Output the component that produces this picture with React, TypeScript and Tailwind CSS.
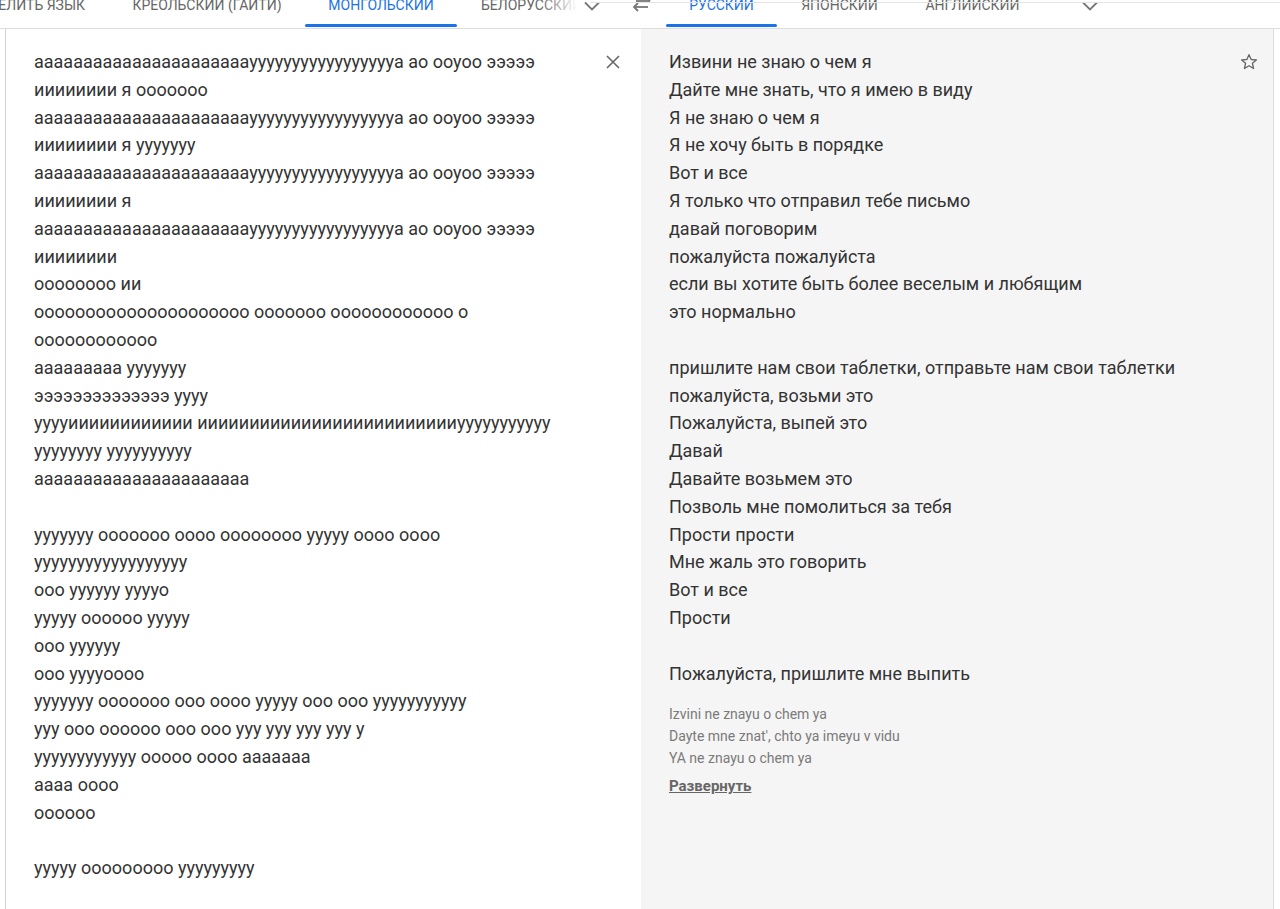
import React from "react";

const L1 = "аааааааааааааааааааааауууууууууууууууууа ао ооуоо эээээ";
const left = [
  L1,
  "ииииииии я ооооооо",
  L1,
  "ииииииии я ууууууу",
  L1,
  "ииииииии я",
  L1,
  "ииииииии",
  "оооооооо ии",
  "ооооооооооооооооооооо ооооооо оооооооооооо о",
  "оооооооооооо",
  "ааааааааа ууууууу",
  "ээээээээээээээ уууу",
  "ууууииииииииииии иииииииииииииииииииииииииууууууууууу",
  "уууууууу уууууууууу",
  "аааааааааааааааааааааа",
  "",
  "ууууууу ооооооо оооо оооооооо ууууу оооо оооо",
  "уууууууууууууууууу",
  "ооо уууууу ууууо",
  "ууууу оооооо ууууу",
  "ооо уууууу",
  "ооо ууууоооо",
  "ууууууу ооооооо ооо оооо ууууу ооо ооо ууууууууууу",
  "ууу ооо оооооо ооо ооо ууу ууу ууу ууу у",
  "уууууууууууу ооооо оооо ааааааа",
  "аааа оооо",
  "оооооо",
  "",
  "ууууу ооооооооо ууууууууу",
];

const right = [
  "Извини не знаю о чем я",
  "Дайте мне знать, что я имею в виду",
  "Я не знаю о чем я",
  "Я не хочу быть в порядке",
  "Вот и все",
  "Я только что отправил тебе письмо",
  "давай поговорим",
  "пожалуйста пожалуйста",
  "если вы хотите быть более веселым и любящим",
  "это нормально",
  "",
  "пришлите нам свои таблетки, отправьте нам свои таблетки",
  "пожалуйста, возьми это",
  "Пожалуйста, выпей это",
  "Давай",
  "Давайте возьмем это",
  "Позволь мне помолиться за тебя",
  "Прости прости",
  "Мне жаль это говорить",
  "Вот и все",
  "Прости",
  "",
  "Пожалуйста, пришлите мне выпить",
];

function Chevron() {
  return (
    <svg width="20" height="12" viewBox="0 0 20 12" fill="none">
      <path d="M3 1.5 L10 8.5 L17 1.5" stroke="#777" strokeWidth="1.8" />
    </svg>
  );
}

function Tab({ label, active, w }: { label: string; active?: boolean; w: string }) {
  return (
    <div className={`relative h-full flex justify-center shrink-0 ${w}`}>
      <span
        className={`-mt-[2px] text-[14px] leading-[14px] whitespace-nowrap ${
          active ? "text-[#1a73e8]" : "text-[#666]"
        }`}
      >
        {label}
      </span>
      {active && <div className="absolute left-0 right-0 bottom-[1px] h-[3px] bg-[#1a73e8] rounded-sm" />}
    </div>
  );
}

export default function App() {
  return (
    <div className="w-[1280px] h-[909px] bg-white overflow-hidden relative font-['Roboto',sans-serif]">
      {/* top tab bar */}
      <div className="h-[29px] border-b border-[#dedede] flex relative overflow-hidden">
        <div className="w-[109px] shrink-0 h-full flex justify-end pr-6 overflow-hidden">
          <span className="-mt-[2px] text-[14px] leading-[14px] whitespace-nowrap text-[#666]">
            ОПРЕДЕЛИТЬ ЯЗЫК
          </span>
        </div>
        <Tab label="КРЕОЛЬСКИЙ (ГАЙТИ)" w="w-[196px]" />
        <Tab label="МОНГОЛЬСКИЙ" active w="w-[152px]" />
        <div className="relative w-[120px] shrink-0 h-full flex pl-6 overflow-hidden">
          <span className="-mt-[2px] text-[14px] leading-[14px] whitespace-nowrap text-[#666]">
            БЕЛОРУССКИЙ
          </span>
          <div className="absolute right-0 top-0 h-full w-[36px] bg-gradient-to-r from-transparent to-white" />
        </div>
        <div className="w-[30px] shrink-0 flex justify-center pt-[1px]">
          <Chevron />
        </div>
        <div className="w-[17px] shrink-0" />
        <div className="w-[36px] shrink-0 flex justify-center">
          <svg width="20" height="14" viewBox="0 0 20 14" fill="none" className="-mt-[2px]">
            <path d="M2 9 H16" stroke="#777" strokeWidth="1.8" />
            <path d="M6 5 L2 9 L6 13" stroke="#777" strokeWidth="1.8" />
            <path d="M4 3 H18" stroke="#777" strokeWidth="1.8" />
            <path d="M14 -1 L18 3" stroke="#777" strokeWidth="1.8" />
          </svg>
        </div>
        <div className="w-[6px] shrink-0" />
        <Tab label="РУССКИЙ" active w="w-[111px]" />
        <Tab label="ЯПОНСКИЙ" w="w-[125px]" />
        <Tab label="АНГЛИЙСКИЙ" w="w-[141px]" />
        <div className="w-[94px] shrink-0 flex justify-center pt-[1px]">
          <Chevron />
        </div>
        <div className="absolute left-[590px] right-0 top-[2px] h-px bg-[#e4e4e4]" />
      </div>

      {/* panels */}
      <div className="flex h-[880px]">
        <div className="w-[5px] shrink-0" />
        <div className="relative w-[636px] shrink-0 border-l border-[#d4d4d4] bg-white pl-[28px] pt-[19px] text-[18px] leading-[27.8px] text-[#333]">
          {left.map((l, i) => (
            <div key={i} className="whitespace-nowrap h-[27.8px]">
              {l}
            </div>
          ))}
          <svg
            className="absolute left-[599px] top-[25px]"
            width="16"
            height="16"
            viewBox="0 0 16 16"
            fill="none"
          >
            <path d="M2 2 L14 14 M14 2 L2 14" stroke="#666" strokeWidth="1.6" />
          </svg>
        </div>
        <div className="relative w-[633px] shrink-0 bg-[#f5f5f5] border-r border-[#dcdcdc] pl-[28px] pt-[19px] text-[#333]">
          <div className="text-[18px] leading-[27.8px]">
            {right.map((l, i) => (
              <div key={i} className="whitespace-nowrap h-[27.8px]">
                {l}
              </div>
            ))}
          </div>
          <div className="mt-[16px] text-[14px] leading-[22px] text-[#7a7a7a]">
            <div>Izvini ne znayu o chem ya</div>
            <div>Dayte mne znat', chto ya imeyu v vidu</div>
            <div>YA ne znayu o chem ya</div>
          </div>
          <div className="mt-[6px] text-[15px] leading-[22px] font-bold underline text-[#666]">
            Развернуть
          </div>
          <svg
            className="absolute left-[598px] top-[23px]"
            width="20"
            height="20"
            viewBox="0 0 24 24"
            fill="none"
          >
            <path
              d="M12 3.2 L14.6 9 L20.8 9.5 L16.1 13.6 L17.5 19.8 L12 16.5 L6.5 19.8 L7.9 13.6 L3.2 9.5 L9.4 9 Z"
              stroke="#666"
              strokeWidth="1.6"
              strokeLinejoin="round"
            />
          </svg>
        </div>
      </div>
    </div>
  );
}
